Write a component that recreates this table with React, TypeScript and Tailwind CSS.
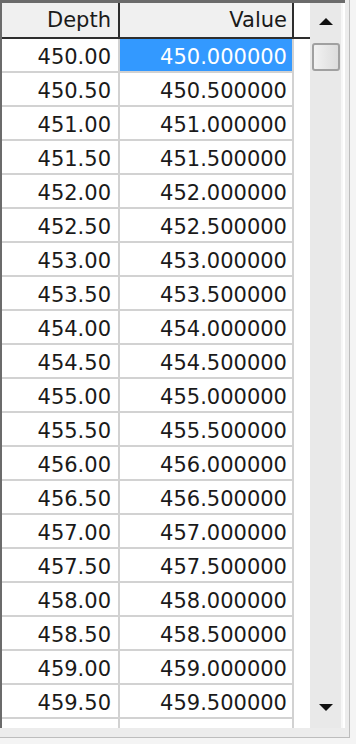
const rows = Array.from({ length: 21 }, (_, i) => 450 + i * 0.5);

const font = { fontFamily: '"DejaVu Sans", Verdana, sans-serif' };

const App = () => {
  return (
    <div
      className="w-[356px] h-[744px] bg-[#f4f4f4] overflow-hidden text-[#1a1a1a]"
      style={font}
    >
      <div className="w-[350px] h-[738px] border-r border-b border-[#bdbdbd] bg-[#ececec]">
        <div className="w-[345px] h-[728px] flex border-t-[3px] border-l-[2px] border-[#6b6b6b] bg-white overflow-hidden">
          {/* grid */}
          <div className="w-[308px] flex flex-col">
            <div className="flex h-[36px] shrink-0 border-b-2 border-[#2e2e2e]">
              <div className="w-[118px] bg-[#f0f0f0] border-r-2 border-[#2e2e2e] flex items-center justify-end pr-[7px] text-[21px] leading-none">
                Depth
              </div>
              <div className="w-[174px] bg-[#f0f0f0] border-r-2 border-[#2e2e2e] flex items-center justify-end pr-[5px] text-[21px] leading-none">
                Value
              </div>
              <div className="flex-1 bg-white" />
            </div>
            {rows.map((d, i) => {
              // last row is only partly in view, its text lies below the fold
              const last = i === rows.length - 1;
              return (
                <div key={d} className="flex h-[34px] shrink-0">
                  <div className="w-[118px] border-r-2 border-b-2 border-[#d2d2d2] flex items-center justify-end pr-[7px] pt-[4px] text-[21px] leading-none">
                    {last ? "" : d.toFixed(2)}
                  </div>
                  <div
                    className={
                      i === 0
                        ? "w-[174px] bg-[#3399ff] text-white border-r-2 border-b-2 border-[#d2d2d2] flex items-center justify-end pr-[5px] pt-[4px] text-[21px] leading-none"
                        : "w-[174px] border-r-2 border-b-2 border-[#d2d2d2] flex items-center justify-end pr-[5px] pt-[4px] text-[21px] leading-none"
                    }
                  >
                    {last ? "" : d.toFixed(6)}
                  </div>
                  <div className="flex-1" />
                </div>
              );
            })}
          </div>
          {/* scrollbar */}
          <div className="w-[33px] bg-[#e9e9e9] border-r-2 border-[#f7f7f7] flex flex-col items-center">
            <div className="h-[38px] w-full flex items-center justify-center pb-[2px]">
              <svg width="14" height="7" viewBox="0 0 14 7">
                <path d="M7 0 L14 7 L0 7 Z" fill="#111" />
              </svg>
            </div>
            <div className="w-[28px] h-[28px] mt-[2px] rounded-[3px] border-2 border-[#a0a0a0] bg-gradient-to-r from-[#f2f2f2] to-[#dcdcdc]" />
            <div className="flex-1" />
            <div className="h-[34px] w-full flex items-start justify-center pt-[10px]">
              <svg width="14" height="7" viewBox="0 0 14 7">
                <path d="M0 0 L14 0 L7 7 Z" fill="#111" />
              </svg>
            </div>
          </div>
        </div>
      </div>
    </div>
  );
};

export default App;
